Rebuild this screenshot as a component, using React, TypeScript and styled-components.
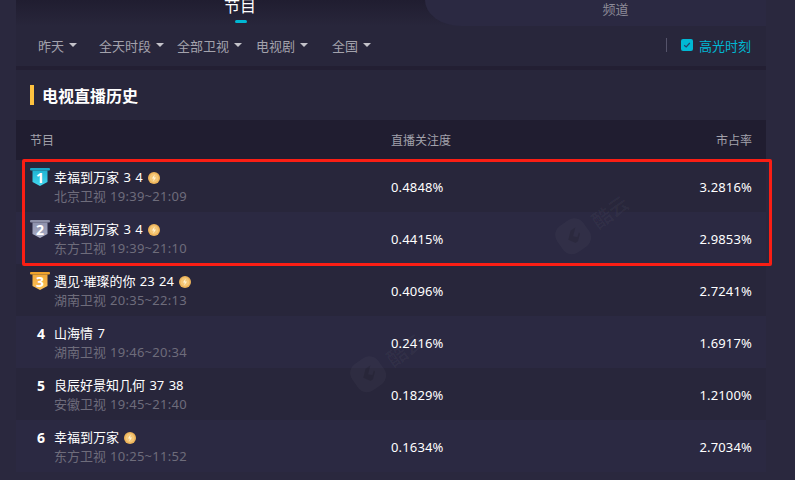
import React from 'react';
import styled, { createGlobalStyle } from 'styled-components';

const FONT = `"Noto Sans", "Noto Sans CJK SC", sans-serif`;

const GlobalStyle = createGlobalStyle`
  html, body {
    margin: 0;
    padding: 0;
    height: 100%;
    overflow: hidden;
    background: #2a283e;
    font-family: ${FONT};
  }
`;

const Page = styled.div`
  width: 750px;
  height: 480px;
  margin-left: 16px;
  position: relative;
`;

const Tabs = styled.div`
  display: grid;
  grid-template-columns: 409px 1fr;
  height: 26px;
  background: linear-gradient(180deg, #201d30 0%, #28263b 100%);
`;

const MainTab = styled.div`
  position: relative;
  display: flex;
  justify-content: center;
  color: #fff;
  font-size: 16px;
  line-height: 12px;
  padding-left: 39px;
  &::after {
    content: '';
    position: absolute;
    left: 219px;
    top: 20px;
    width: 12px;
    height: 3px;
    border-radius: 2px;
    background: #00b8d4;
  }
`;

const SideTab = styled.div`
  display: flex;
  justify-content: center;
  color: #8d8b98;
  font-size: 13px;
  line-height: 18px;
  background: #2b2942;
  border-bottom-left-radius: 36px 26px;
  padding-left: 40px;
`;

const FilterBar = styled.div`
  display: flex;
  align-items: center;
  height: 38px;
  padding: 0 15px 2px 22px;
  background: #28263b;
  border-bottom: 4px solid #231f33;
`;

const Filter = styled.div<{ $width: number }>`
  display: flex;
  align-items: center;
  gap: 5px;
  width: ${(p) => p.$width}px;
  color: #a3a2ac;
  font-size: 13px;
`;

const Caret = styled.span`
  width: 0;
  height: 0;
  border-left: 4px solid transparent;
  border-right: 4px solid transparent;
  border-top: 4px solid #c4c3ca;
`;

const Highlight = styled.div`
  display: flex;
  align-items: center;
  gap: 6px;
  margin-left: auto;
  padding-left: 14px;
  border-left: 1px solid #55536a;
  height: 14px;
  color: #00b8d4;
  font-size: 13px;
`;

const Check = styled.span`
  display: flex;
  align-items: center;
  justify-content: center;
  width: 12px;
  height: 12px;
  border-radius: 2px;
  background: #00b8d4;
`;

const Section = styled.div`
  display: flex;
  align-items: center;
  gap: 8px;
  height: 50px;
  padding-left: 14px;
  background: #28263b;
`;

const Marker = styled.span`
  width: 4px;
  height: 20px;
  background: #fdc13f;
`;

const SectionTitle = styled.h2`
  margin: 0;
  color: #fff;
  font-size: 16px;
  font-weight: 700;
`;

const RowGrid = styled.div`
  display: grid;
  grid-template-columns: 361px 1fr auto;
  align-items: center;
  padding: 0 14px;
`;

const HeadRow = styled(RowGrid)`
  height: 40px;
  background: #201d30;
  color: #a3a2ac;
  font-size: 12px;
`;

const Row = styled(RowGrid)<{ $alt: boolean }>`
  box-sizing: border-box;
  height: 52px;
  padding-top: 2px;
  background: ${(p) => (p.$alt ? '#2b2942' : '#28263b')};
  color: #fff;
`;

const Programme = styled.div`
  display: flex;
  align-items: flex-start;
`;

const Rank = styled.div`
  flex: none;
  box-sizing: border-box;
  width: 24px;
  padding-left: 7px;
  color: #fff;
  font-size: 14px;
  font-weight: 700;
  line-height: 19px;
`;

const BadgeSlot = styled.div`
  flex: none;
  width: 24px;
  height: 38px;
`;

const Info = styled.div`
  display: flex;
  flex-direction: column;
`;

const Title = styled.div`
  display: flex;
  align-items: center;
  gap: 5px;
  font-size: 13px;
  line-height: 19px;
  word-spacing: 1px;
  color: #fff;
  white-space: nowrap;
`;

const Sub = styled.div`
  display: flex;
  gap: 4px;
  font-size: 13px;
  line-height: 19px;
  color: #6e6c7b;
  white-space: nowrap;
`;

const Time = styled.span`
  letter-spacing: 0.27px;
`;

const Value = styled.div`
  font-size: 13px;
  letter-spacing: 0.15px;
  color: #fff;
`;

const Redbox = styled.div`
  position: absolute;
  left: 6px;
  top: 159px;
  box-sizing: border-box;
  width: 750px;
  height: 107px;
  border: 3px solid #fa1e14;
  border-radius: 2px;
  pointer-events: none;
`;

const Mark = styled.div<{ $x: number; $y: number }>`
  position: absolute;
  left: ${(p) => p.$x}px;
  top: ${(p) => p.$y}px;
  display: flex;
  align-items: center;
  gap: 6px;
  transform: rotate(-35deg);
  color: rgba(255, 255, 255, 0.03);
  font-size: 20px;
  font-weight: 700;
  pointer-events: none;
`;

const Table = styled.div``;

const BADGES: Record<number, [string, string, string]> = {
  1: ['#19a9c9', '#43d6ee', '#1fb4d2'],
  2: ['#8d90a8', '#a9adc6', '#8e92ad'],
  3: ['#f0a32c', '#fcc25a', '#f2a93a'],
};

const RankBadge = ({ rank }: { rank: number }) => {
  const [bar, top, bottom] = BADGES[rank];
  const id = `badge-${rank}`;
  return (
    <svg width="20" height="19" viewBox="0 0 20 19">
      <defs>
        <linearGradient id={id} x1="0" y1="0" x2="0" y2="1">
          <stop offset="0" stopColor={bottom} />
          <stop offset="1" stopColor={top} />
        </linearGradient>
      </defs>
      <rect x="0" y="0" width="20" height="2.5" rx="1" fill={bar} />
      <path d="M2.5 2.5h15v11.5l-7.5 4-7.5-4z" fill={`url(#${id})`} />
      <text
        x="10"
        y="14.5"
        textAnchor="middle"
        fontSize="14"
        fontWeight="700"
        fill="#fff"
        fontFamily="Noto Sans, sans-serif"
      >
        {rank}
      </text>
    </svg>
  );
};

const Coin = () => (
  <svg width="12" height="12" viewBox="0 0 12 12">
    <circle cx="6" cy="6" r="6" fill="#eeb45a" />
    <circle cx="6" cy="6" r="4.4" fill="#f5c777" />
    <path d="M6.6 2.4 3.9 6.5h1.8l-.4 3.1 2.8-4.2H6.2z" fill="#fff3d2" />
  </svg>
);

const Logo = () => (
  <svg width="36" height="36" viewBox="0 0 36 36">
    <rect x="2" y="2" width="32" height="32" rx="11" fill="rgba(255,255,255,0.03)" />
    <path d="M12 18l7-6h6l-7 6 3 3 4-3v2l-6 5h-3z" fill="rgba(0,0,0,0.12)" />
  </svg>
);

const FILTERS = [
  { label: '昨天', width: 61 },
  { label: '全天时段', width: 78 },
  { label: '全部卫视', width: 79 },
  { label: '电视剧', width: 76 },
  { label: '全国', width: 60 },
];

const ROWS = [
  { title: '幸福到万家 3 4', coin: true, channel: '北京卫视', time: '19:39~21:09', focus: '0.4848%', share: '3.2816%' },
  { title: '幸福到万家 3 4', coin: true, channel: '东方卫视', time: '19:39~21:10', focus: '0.4415%', share: '2.9853%' },
  { title: '遇见·璀璨的你 23 24', coin: true, channel: '湖南卫视', time: '20:35~22:13', focus: '0.4096%', share: '2.7241%' },
  { title: '山海情 7', coin: false, channel: '湖南卫视', time: '19:46~20:34', focus: '0.2416%', share: '1.6917%' },
  { title: '良辰好景知几何 37 38', coin: false, channel: '安徽卫视', time: '19:45~21:40', focus: '0.1829%', share: '1.2100%' },
  { title: '幸福到万家', coin: true, channel: '东方卫视', time: '10:25~11:52', focus: '0.1634%', share: '2.7034%' },
];

const App = () => {
  return (
    <Page>
      <GlobalStyle />
      <Tabs>
        <MainTab>节目</MainTab>
        <SideTab>频道</SideTab>
      </Tabs>

      <FilterBar>
        {FILTERS.map((f) => (
          <Filter key={f.label} $width={f.width}>
            {f.label}
            <Caret />
          </Filter>
        ))}
        <Highlight>
          <Check>
            <svg width="8" height="8" viewBox="0 0 8 8">
              <path d="M1.2 4.2 3.2 6 6.8 2" fill="none" stroke="#27406a" strokeWidth="1.2" />
            </svg>
          </Check>
          高光时刻
        </Highlight>
      </FilterBar>

      <Section>
        <Marker />
        <SectionTitle>电视直播历史</SectionTitle>
      </Section>

      <Table>
        <HeadRow>
          <div>节目</div>
          <div>直播关注度</div>
          <div>市占率</div>
        </HeadRow>
        {ROWS.map((row, index) => (
          <Row key={index} $alt={index % 2 === 1}>
            <Programme>
              {index < 3 ? (
                <BadgeSlot>
                  <RankBadge rank={index + 1} />
                </BadgeSlot>
              ) : (
                <Rank>{index + 1}</Rank>
              )}
              <Info>
                <Title>
                  {row.title}
                  {row.coin && <Coin />}
                </Title>
                <Sub>
                  {row.channel}
                  <Time>{row.time}</Time>
                </Sub>
              </Info>
            </Programme>
            <Value>{row.focus}</Value>
            <Value>{row.share}</Value>
          </Row>
        ))}
      </Table>

      <Mark $x={330} $y={343}>
        <Logo />
        酷云
      </Mark>
      <Mark $x={535} $y={205}>
        <Logo />
        酷云
      </Mark>
      <Redbox />
    </Page>
  );
};

export default App;
